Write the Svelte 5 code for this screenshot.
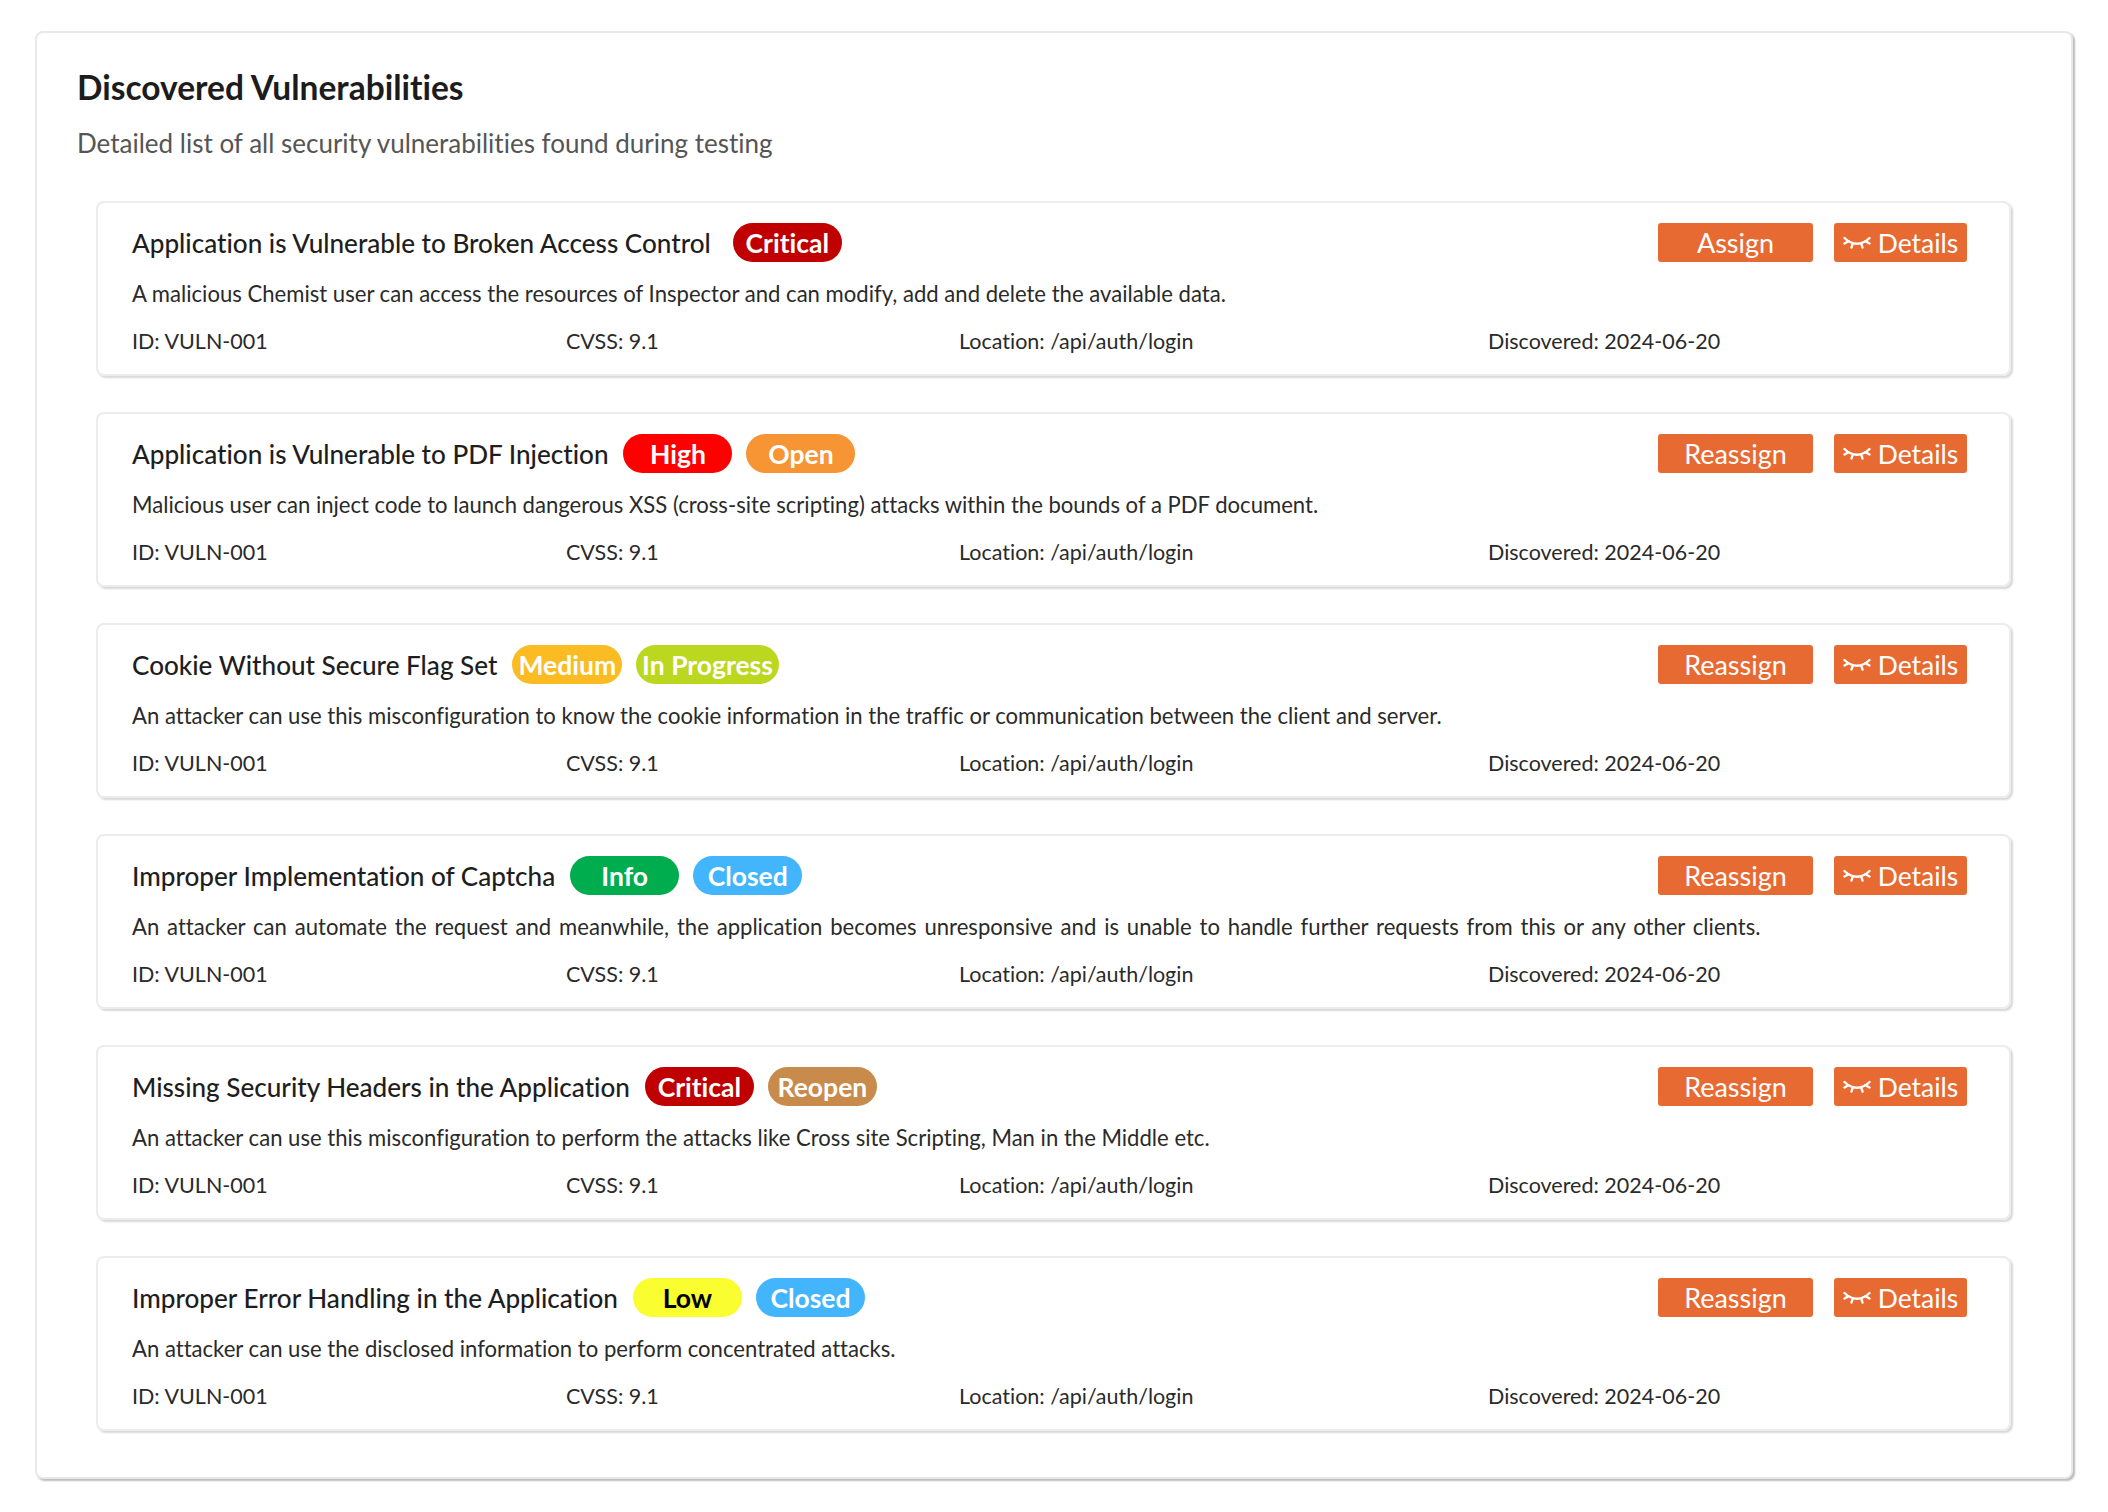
<script>
  const items = [
    { title: 'Application is Vulnerable to Broken Access Control', badges: [['Critical', 'critical']], action: 'Assign', desc: 'A malicious Chemist user can access the resources of Inspector and can modify, add and delete the available data.' },
    { title: 'Application is Vulnerable to PDF Injection', badges: [['High', 'high'], ['Open', 'open']], action: 'Reassign', desc: 'Malicious user can inject code to launch dangerous XSS (cross-site scripting) attacks within the bounds of a PDF document.' },
    { title: 'Cookie Without Secure Flag Set', badges: [['Medium', 'medium'], ['In Progress', 'progress']], action: 'Reassign', desc: 'An attacker can use this misconfiguration to know the cookie information in the traffic or communication between the client and server.' },
    { title: 'Improper Implementation of Captcha', badges: [['Info', 'info'], ['Closed', 'closed']], action: 'Reassign', desc: 'An attacker can automate the request and meanwhile, the application becomes unresponsive and is unable to handle further requests from this or any other clients.', wide: true },
    { title: 'Missing Security Headers in the Application', badges: [['Critical', 'critical'], ['Reopen', 'reopen']], action: 'Reassign', desc: 'An attacker can use this misconfiguration to perform the attacks like Cross site Scripting, Man in the Middle etc.' },
    { title: 'Improper Error Handling in the Application', badges: [['Low', 'low'], ['Closed', 'closed']], action: 'Reassign', desc: 'An attacker can use the disclosed information to perform concentrated attacks.' }
  ];
</script>

<div class="page">
  <section class="panel">
    <h2>Discovered Vulnerabilities</h2>
    <p class="sub">Detailed list of all security vulnerabilities found during testing</p>
    <div class="list">
      {#each items as item}
        <article class="card">
          <div class="head">
            <h3>{item.title}</h3>
            {#each item.badges as [label, kind]}
              <span class="badge {kind}">{label}</span>
            {/each}
            <div class="actions">
              <button class="assign">{item.action}</button>
              <button class="details">
                <svg viewBox="0 0 28 14" width="28" height="14" fill="none" stroke="#fff" stroke-width="2.4" stroke-linecap="round">
                  <path d="M1.5 2C6 6.5 9.5 7.8 14 7.8S22 6.5 26.5 2" />
                  <path d="M1.5 7.5 5.5 5.2M8.5 11.5 9.8 7.4M19.5 11.5 18.2 7.4M26.5 7.5 22.5 5.2" />
                </svg>
                Details
              </button>
            </div>
          </div>
          <p class="desc" class:wide={item.wide}>{item.desc}</p>
          <div class="meta">
            <span>ID: VULN-001</span>
            <span>CVSS: 9.1</span>
            <span>Location: /api/auth/login</span>
            <span>Discovered: 2024-06-20</span>
          </div>
        </article>
      {/each}
    </div>
  </section>
</div>

<style>
  :global(body) {
    margin: 0;
    background: #fff;
  }

  .page {
    padding: 31px 35px 32px 35px;
    font-family: Lato, 'Open Sans', sans-serif;
    font-variant-ligatures: none;
    color: #222;
  }

  .panel {
    height: 1448px;
    box-sizing: border-box;
    padding: 34px 44px 0 40px;
    border: 2px solid #e8e8e8;
    border-radius: 8px;
    box-shadow: 2px 2px 2px #bbb;
    background: #fff;
  }

  h2 {
    margin: 0;
    font-size: 33.5px;
    line-height: 40px;
    font-weight: 700;
    color: #1c1c1c;
  }

  .sub {
    margin: 20px 0 0;
    font-size: 26px;
    line-height: 32px;
    color: #555;
  }

  .list {
    display: flex;
    flex-direction: column;
    gap: 36px;
    margin: 42px 16px 0 19px;
  }

  .card {
    height: 175px;
    box-sizing: border-box;
    padding: 20px 42px 0 34px;
    border: 2px solid #ececec;
    border-radius: 8px;
    box-shadow: 2px 2px 2px #d8d8d8;
  }

  .head {
    display: flex;
    align-items: center;
    gap: 14px;
    height: 39px;
  }

  h3 {
    margin: 0 1px 0 0;
    font-size: 26.1px;
    font-weight: 500;
    color: #1e1e1e;
  }

  .card:first-child h3 {
    margin-right: 8px;
  }

  .badge {
    display: flex;
    justify-content: center;
    align-items: center;
    min-width: 109px;
    height: 39px;
    box-sizing: border-box;
    padding: 0 6px;
    border-radius: 20px;
    font-size: 26.5px;
    font-weight: 700;
    color: #fff;
  }

  .critical { background: #c00000; }
  .high { background: #ff0000; }
  .open { background: #f79433; }
  .medium { background: #fbbc23; }
  .progress { background: #bcd71f; }
  .info { background: #00ad4e; }
  .closed { background: #42b5fd; }
  .reopen { background: #c98b4b; }
  .low { background: #fafd30; color: #000; }

  .actions {
    display: flex;
    gap: 21px;
    margin-left: auto;
  }

  button {
    display: flex;
    justify-content: center;
    align-items: center;
    gap: 7px;
    height: 39px;
    padding: 0;
    border: 0;
    border-radius: 3px;
    background: #e86a33;
    color: #fff;
    font: inherit;
    font-size: 26.5px;
  }

  .assign {
    width: 155px;
    font-size: 27px;
  }

  .details {
    width: 133px;
  }

  .desc {
    margin: 18px 0 0;
    font-size: 22.1px;
    line-height: 28px;
    color: #2a2a2a;
  }

  .desc.wide {
    word-spacing: 2.2px;
  }

  .meta {
    display: grid;
    grid-template-columns: 434px 393px 529px 1fr;
    margin-top: 19px;
    font-size: 21.5px;
    line-height: 28px;
    color: #2a2a2a;
  }
</style>
